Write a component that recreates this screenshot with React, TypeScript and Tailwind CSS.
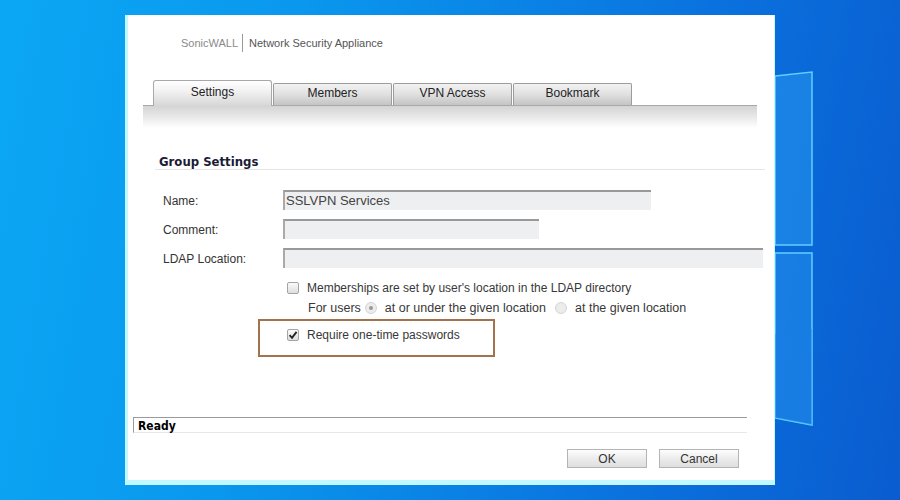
import React from "react";

const sans = "font-['Liberation_Sans',Arial,sans-serif]";
const heavy = "font-['DejaVu_Sans_Condensed','DejaVu_Sans',sans-serif] font-bold";

function Checkbox({ checked }: { checked?: boolean }) {
  return (
    <div className="flex h-[12px] w-[12px] shrink-0 items-center justify-center rounded-[2px] border border-[#a4a4a4] bg-[linear-gradient(#fafafa,#dedede)]">
      {checked && (
        <svg width="10" height="10" viewBox="0 0 10 10">
          <path d="M1.6 5.2 L4 7.8 L8.6 1.8" fill="none" stroke="#222" strokeWidth="1.9" />
        </svg>
      )}
    </div>
  );
}

function Radio({ selected }: { selected?: boolean }) {
  return (
    <div className="flex h-[12px] w-[12px] shrink-0 items-center justify-center rounded-full border border-[#d4d4d4] bg-[#ececec]">
      {selected && <div className="h-[4px] w-[4px] rounded-full bg-[#9a9a9a]" />}
    </div>
  );
}

function Field({ label, width, value }: { label: string; width: string; value?: string }) {
  return (
    <div className="ml-[35px] flex h-[20px] items-center">
      <div className="w-[120px] pt-[1px] text-[12px] text-[#333]">{label}</div>
      <div
        className={`flex h-[20px] items-center border-t-2 border-l-2 border-t-[#999] border-l-[#aaa] bg-[#edeff0] pl-[1px] text-[13px] text-[#444] ${width}`}
      >
        {value}
      </div>
    </div>
  );
}

function Tab({ label, active }: { label: string; active?: boolean }) {
  if (active) {
    return (
      <div className="relative z-10 -mb-px flex h-[26px] w-[119px] items-start justify-center rounded-t-[3px] border border-b-0 border-[#a8a8a8] bg-[linear-gradient(#ffffff,#f2f2f2_40%,#d6d6d6)] pt-[2px] text-[12px] text-[#222]">
        {label}
      </div>
    );
  }
  return (
    <div className="ml-px flex h-[22px] w-[119px] items-start justify-center rounded-t-[2px] border border-b-0 border-[#9c9c9c] bg-[linear-gradient(#f2f2f2,#e2e2e2_45%,#c4c4c4)] text-[12px] text-[#222]">
      {label}
    </div>
  );
}

export default function App() {
  return (
    <div
      className={`flex h-[500px] w-[900px] items-start overflow-hidden bg-[linear-gradient(100deg,#0ba7f4_0%,#0a98ee_30%,#0a72de_72%,#0a5ccf_100%)] ${sans}`}
    >
      <div className="w-[125px] shrink-0" />

      <div className="mt-[15px] flex h-[470px] w-[650px] shrink-0 flex-col border-b-[5px] border-l-[3px] border-r border-[#c2f8ff] bg-white">
        <div className="ml-[53px] mt-[19px] flex h-[18px] items-center text-[11px]">
          <span className="text-[#8a8a8a]">SonicWALL</span>
          <div className="ml-[4px] mr-[6px] h-[18px] w-px bg-[#9a9a9a]" />
          <span className="text-[#555]">Network Security Appliance</span>
        </div>

        <div className="ml-[15px] mt-[28px] w-[614px]">
          <div className="flex items-end pl-[10px]">
            <Tab label="Settings" active />
            <Tab label="Members" />
            <Tab label="VPN Access" />
            <Tab label="Bookmark" />
          </div>
          <div className="h-[23px] border-t border-[#a8a8a8] bg-[linear-gradient(#d4d4d4,#e6e6e6_45%,#ffffff)]" />
        </div>

        <div className={`ml-[27px] mt-[25px] h-[17px] w-[610px] border-b border-[#e4e4e4] pl-[4px] text-[13px] leading-[17px] text-[#1b1b36] ${heavy}`}>
          Group Settings
        </div>

        <div className="mt-[20px] flex flex-col gap-[9px]">
          <Field label="Name:" width="w-[368px]" value="SSLVPN Services" />
          <Field label="Comment:" width="w-[256px]" />
          <Field label="LDAP Location:" width="w-[480px]" />
        </div>

        <div className="ml-[159px] mt-[13px] flex h-[14px] items-center gap-[8px] text-[12px] text-[#383838]">
          <Checkbox />
          <span>Memberships are set by user's location in the LDAP directory</span>
        </div>
        <div className="ml-[180px] mt-[6px] flex h-[14px] items-center text-[12.5px] text-[#383838]">
          <span>For users</span>
          <div className="ml-[4px] mr-[8px]">
            <Radio selected />
          </div>
          <span>at or under the given location</span>
          <div className="ml-[9px] mr-[8px]">
            <Radio />
          </div>
          <span>at the given location</span>
        </div>

        <div className="ml-[130px] mt-[4px] h-[38px] w-[237px] border-2 border-[#a3734e] pl-[27px] pt-[7px]">
          <div className="flex h-[14px] items-center gap-[8px] text-[12px] text-[#383838]">
            <Checkbox checked />
            <span>Require one-time passwords</span>
          </div>
        </div>

        <div className="ml-[5px] mt-[60px] flex h-[16px] w-[614px] items-center border-t border-l border-b border-t-[#9a9a9a] border-l-[#9a9a9a] border-b-[#e8e8e8] pl-[4px] pt-[2px]">
          <span className={`text-[12px] leading-[14px] text-black ${heavy}`}>Ready</span>
        </div>

        <div className="ml-[439px] mt-[16px] flex gap-[12px]">
          <button className="h-[19px] w-[80px] border border-[#b4b4b4] bg-[linear-gradient(#fdfdfd,#ececec_50%,#dedede)] text-[12px] text-[#333]">
            OK
          </button>
          <button className="h-[19px] w-[80px] border border-[#b4b4b4] bg-[linear-gradient(#fdfdfd,#ececec_50%,#dedede)] text-[12px] text-[#333]">
            Cancel
          </button>
        </div>
      </div>

      <div className="w-[125px] shrink-0">
        <svg width="125" height="500" viewBox="0 0 125 500">
          <polygon points="0,76 37,72 37,245 0,245" fill="#2a9af2" fillOpacity="0.5" stroke="#5fd0ff" strokeWidth="1.5" />
          <polygon points="0,253 37,253 37,425 0,418" fill="#2a98f2" fillOpacity="0.45" stroke="#5fd0ff" strokeWidth="1.5" />
          <polygon points="0,334 37,329 37,425 0,418" fill="#1a7ee6" fillOpacity="0.35" />
        </svg>
      </div>
    </div>
  );
}
